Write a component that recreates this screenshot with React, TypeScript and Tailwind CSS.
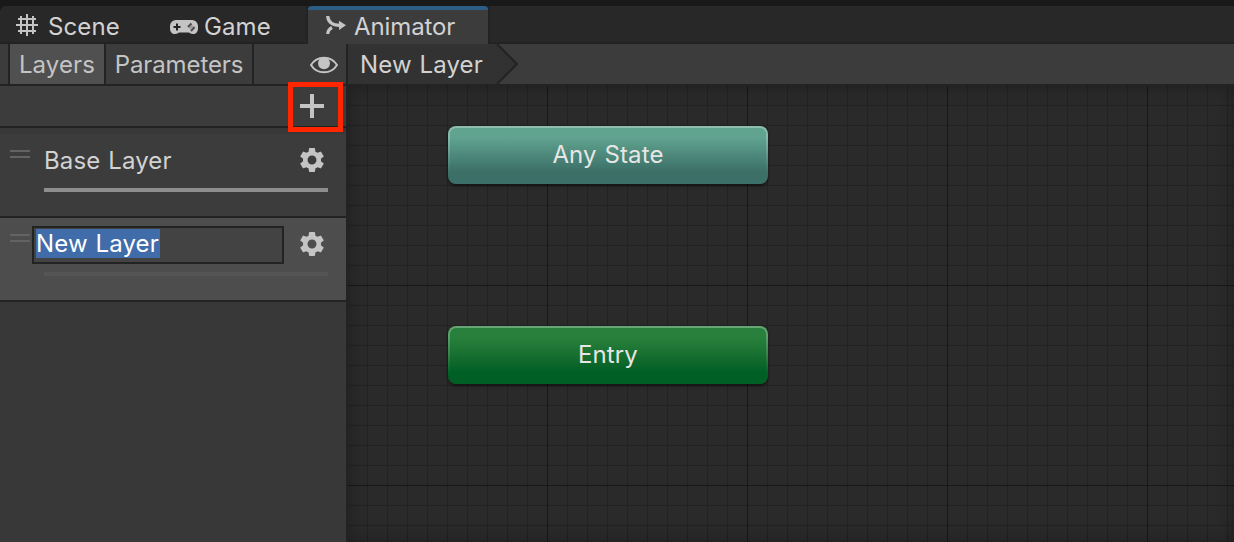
import type { ReactNode } from "react";
import { MdSettings } from "react-icons/md";

function GridIcon() {
  return (
    <svg width="22" height="22" viewBox="0 0 22 22" className="mb-1 shrink-0" shapeRendering="crispEdges">
      <path d="M4 2h2v18H4zM10 0h2v22h-2zM16 2h2v18h-2zM2 4h18v2H2zM0 10h22v2H0zM2 16h18v2H2z" fill="#c4c4c4" />
    </svg>
  );
}

function GamepadIcon() {
  return (
    <svg width="28" height="14" viewBox="0 0 28 14" className="shrink-0">
      <path d="M6 0h16a6 6 0 0 1 6 6v2c0 4-2 6-5 6-2 0-3-1-4-1.500H9C8 13 7 14 5 14c-3 0-5-2-5-6V6a6 6 0 0 1 6-6z" fill="#c4c4c4" />
      <path d="M7 3.500v7M3.500 7h7" stroke="#222222" strokeWidth="2" />
      <path d="M18 7l3.500-3.500M21 11l3.500-4" stroke="#4a4a4a" strokeWidth="2" />
      <path d="M19.500 8.500l3-3" stroke="#9a9a9a" strokeWidth="2" />
    </svg>
  );
}

function AnimatorIcon() {
  return (
    <svg width="20" height="18" viewBox="0 0 20 18" className="mb-1 shrink-0" fill="none" stroke="#c4c4c4" strokeWidth="3.2">
      <path d="M1.700 0C2 5.500 6 9.300 14 9.300" />
      <path d="M1.700 18c.2-3 1.500-5 4.300-6.500" />
      <path d="M13 4.700l7 4.600-7 4.600z" fill="#c4c4c4" stroke="none" />
    </svg>
  );
}

function EyeIcon() {
  return (
    <svg width="28" height="18" viewBox="0 0 28 18" className="shrink-0">
      <path d="M1 9C7-.8 21-.8 27 9 21 18.800 7 18.800 1 9z" fill="none" stroke="#c4c4c4" strokeWidth="2" />
      <circle cx="14" cy="7.300" r="6" fill="#c4c4c4" />
    </svg>
  );
}

function Handle() {
  return <div className="ml-[10px] h-2 w-5 shrink-0 border-y-2 border-[#636363]" />;
}

function Tab({ icon, label, className }: { icon: ReactNode; label: string; className: string }) {
  return (
    <div className={`flex h-full items-center ${className}`}>
      {icon}
      <span>{label}</span>
    </div>
  );
}

function StateNode({ label, className }: { label: string; className: string }) {
  return (
    <div className={`absolute left-[100px] flex h-[58px] w-[320px] items-center justify-center rounded-lg pb-px text-[#e6e6e6] ${className}`}>
      <div className="absolute inset-0 rounded-lg border-x-2 border-t-2 border-white/30 [mask-image:linear-gradient(to_bottom,black,transparent_85%)]" />
      <span>{label}</span>
    </div>
  );
}

export default function App() {
  return (
    <div className="flex h-[542px] w-[1234px] flex-col overflow-hidden bg-[#191919] pt-[6px] font-['Inter',sans-serif] text-[24px] leading-[30px] tracking-[0.12px] text-[#d2d2d2] [word-spacing:1px]">
      <div className="flex h-[38px] shrink-0 rounded-tl-md border-b-2 border-[#232323] bg-[#282828]">
        <Tab icon={<GridIcon />} label="Scene" className="w-[154px] gap-[10px] pt-[6px] pl-4" />
        <Tab icon={<GamepadIcon />} label="Game" className="w-[152px] gap-[6px] pt-[6px] pl-4" />
        <div className="-mb-[2px] h-[38px] w-[184px] border-x-2 border-[#232323]">
          <Tab icon={<AnimatorIcon />} label="Animator" className="gap-2 rounded-t-[4px] border-t-4 border-[#2c5d87] bg-[#3c3c3c] pl-[18px] tracking-[-0.1px]" />
        </div>
      </div>

      <div className="flex min-h-0 flex-1">
        <aside className="flex w-[348px] shrink-0 flex-col border-r-2 border-[#232323] bg-[#383838]">
          <div className="flex h-[42px] shrink-0 border-b-2 border-[#232323] bg-[#3c3c3c] pl-2 text-[#c4c4c4]">
            <div className="flex w-[98px] items-center justify-center border-x-2 border-[#232323] bg-[#505050] pt-[2px]">Layers</div>
            <div className="flex w-[148px] items-center justify-center border-r-2 border-[#232323] pt-[2px] tracking-[-0.1px]">Parameters</div>
            <div className="flex flex-1 items-center justify-end pt-[2px] pr-2">
              <EyeIcon />
            </div>
          </div>
          <div className="relative flex h-[42px] shrink-0 items-center justify-end border-b-2 border-[#232323] bg-[#3c3c3c] pr-[22px]">
            <svg width="24" height="24" viewBox="0 0 24 24" shapeRendering="crispEdges">
              <path d="M10 0h4v10h10v4H14v10h-4V14H0v-4h10z" fill="#c4c4c4" />
            </svg>
            <div className="absolute -top-1 left-[288px] z-10 h-[50px] w-[55px] border-[5px] border-[#ff2600]" />
          </div>
          <div className="h-[90px] shrink-0 border-t-[6px] border-b-2 border-t-[#383838] border-b-[#232323] bg-[#3c3c3c]">
            <div className="flex h-[54px] pt-4">
              <Handle />
              <span className="-mt-1 ml-[14px] flex-1">Base Layer</span>
              <MdSettings className="-mt-[5px] mr-[19px] size-[30px] text-[#c4c4c4]" />
            </div>
            <div className="ml-11 h-1 w-[284px] bg-[#8e8e8e]" />
          </div>
          <div className="h-[84px] shrink-0 border-b-2 border-[#232323] bg-[#4d4d4d]">
            <div className="flex h-[54px] pt-4">
              <Handle />
              <div className="-mt-2 ml-[2px] flex h-[38px] w-[252px] items-center border-2 border-[#232323] bg-[#434343] pb-1 pl-[2px]">
                <span className="h-[29px] w-[124px] bg-[#406caa] leading-[29px] whitespace-nowrap text-white">New Layer</span>
              </div>
              <MdSettings className="-mt-[5px] ml-[13px] size-[30px] text-[#c4c4c4]" />
            </div>
            <div className="ml-11 h-1 w-[284px] bg-[#545454]" />
          </div>
        </aside>

        <main className="flex min-w-0 flex-1 flex-col">
          <div className="flex h-[42px] shrink-0 border-b-2 border-[#232323] bg-[#3c3c3c]">
            <div className="flex w-[148px] items-center bg-[#323232] pt-[2px] pl-3">New Layer</div>
            <svg width="24" height="40" viewBox="0 0 24 40">
              <path d="M0 0h1l20 20L1 40H0z" fill="#323232" />
              <path d="M1 0l20 20L1 40" fill="none" stroke="#232323" strokeWidth="2" />
            </svg>
          </div>
          <div className="relative flex-1 overflow-hidden bg-[#2a2a2a]">
            <svg width="886" height="456" className="absolute inset-0" shapeRendering="crispEdges">
              <defs>
                <pattern id="minor" width="20" height="20" patternUnits="userSpaceOnUse">
                  <path d="M19 0h1v20h-1zM0 19h19v1H0z" fill="#222222" />
                </pattern>
                <pattern id="major" x="-1" y="-1" width="200" height="200" patternUnits="userSpaceOnUse">
                  <path d="M0 0h1v200H0zM1 0h199v1H1z" fill="#181818" />
                </pattern>
              </defs>
              <rect width="886" height="456" fill="url(#minor)" />
              <rect width="886" height="456" fill="url(#major)" />
            </svg>
            <div className="absolute inset-0 shadow-[inset_0_0_18px_rgba(0,0,0,0.3)]" />
            <StateNode label="Any State" className="top-10 bg-linear-to-b from-[#60a38f] from-20% to-[#3b6f67] to-80% shadow-[0_2px_3px_rgba(0,0,0,0.5)]" />
            <StateNode label="Entry" className="top-[240px] bg-linear-to-b from-[#28803c] from-20% to-[#005f25] to-80% shadow-[0_2px_3px_rgba(0,0,0,0.5)]" />
          </div>
        </main>
      </div>
    </div>
  );
}
